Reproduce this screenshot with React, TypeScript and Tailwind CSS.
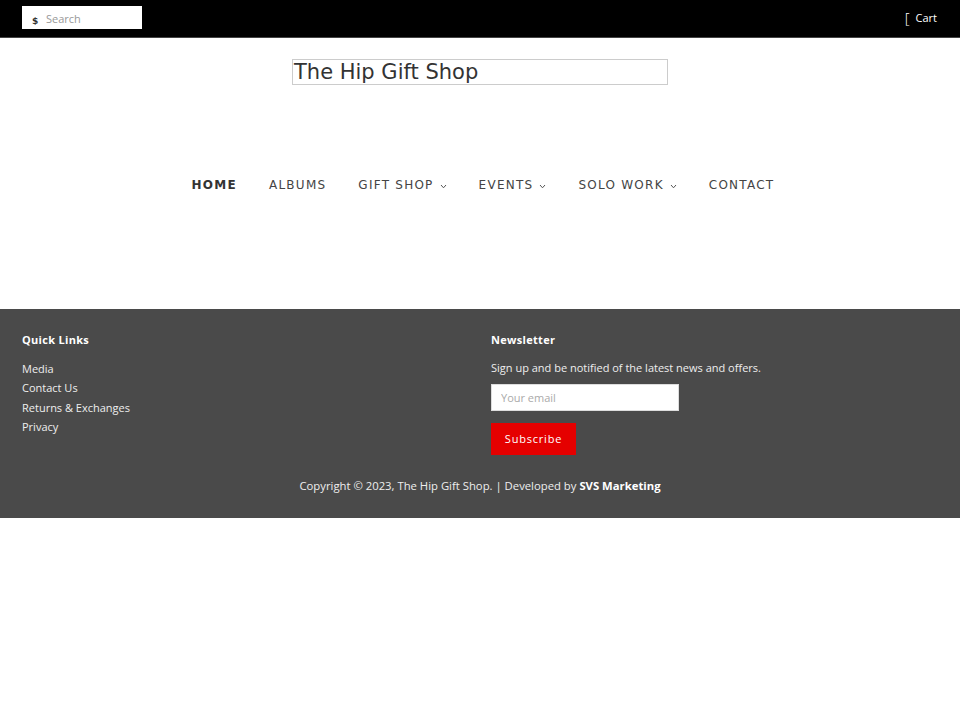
import React from "react";

const navItems = [
  { label: "Home", active: true, drop: false },
  { label: "Albums", active: false, drop: false },
  { label: "Gift Shop", active: false, drop: true },
  { label: "Events", active: false, drop: true },
  { label: "Solo Work", active: false, drop: true },
  { label: "Contact", active: false, drop: false },
];

const quickLinks = ["Media", "Contact Us", "Returns & Exchanges", "Privacy"];

const Chevron = () => (
  <svg width="7" height="5" viewBox="0 0 7 5" className="ml-[6px] mt-[2px]">
    <path d="M1 1 L3.5 3.8 L6 1" fill="none" stroke="#555" strokeWidth="1" />
  </svg>
);

export default function App() {
  return (
    <div className="min-h-[720px] bg-white font-['DejaVu_Sans',sans-serif]">
      {/* top bar */}
      <div className="h-[38px] bg-black border-b border-[#444] flex items-center justify-between pl-[22px] pr-[23px]">
        <div className="relative w-[120px] h-[23px] bg-white mt-[-2px]">
          <span className="absolute left-[10px] top-[11px] text-[9px] font-bold text-[#333] leading-none">$</span>
          <input
            placeholder="Search"
            className="w-full h-full pl-[24px] pb-[2px] text-[11px] text-[#333] placeholder:text-[#999] outline-none bg-transparent font-['Open_Sans',sans-serif]"
          />
        </div>
        <div className="flex items-center text-white text-[11px] font-['Open_Sans',sans-serif]">
          <span className="text-[15px] font-light mr-[6px] leading-none">[</span>
          <span>Cart</span>
        </div>
      </div>

      {/* header */}
      <div className="flex justify-center pt-[21px]">
        <div className="w-[376px] h-[26px] border border-[#ccc] flex items-center text-[21px] text-[#333] leading-none pl-[1px]">
          The Hip Gift Shop
        </div>
      </div>

      {/* navigation */}
      <nav className="flex justify-center items-center gap-[32px] mt-[89px] h-[22px] pl-[6px]">
        {navItems.map((item) => (
          <a
            key={item.label}
            href="#"
            className={`flex items-center uppercase text-[12px] tracking-[1.25px] ${
              item.active ? "font-bold text-[#333]" : "text-[#444]"
            }`}
          >
            {item.label}
            {item.drop && <Chevron />}
          </a>
        ))}
      </nav>

      {/* footer */}
      <footer className="mt-[113px] bg-[#4a4a4a] text-white px-[22px] pt-[23px] pb-[23px] font-['Open_Sans',sans-serif]">
        <div className="grid grid-cols-2 gap-[22px]">
          <div>
            <h4 className="text-[11px] font-bold mb-[13px] tracking-[0.3px]">Quick Links</h4>
            <ul className="text-[11px] text-[#eee] flex flex-col gap-[5px]">
              {quickLinks.map((l) => (
                <li key={l} className="leading-[14.5px]">{l}</li>
              ))}
            </ul>
          </div>
          <div>
            <h4 className="text-[11px] font-bold mb-[11px] tracking-[0.3px]">Newsletter</h4>
            <p className="text-[11px] text-[#eee] mb-[8px]">Sign up and be notified of the latest news and offers.</p>
            <input
              placeholder="Your email"
              className="block w-[188px] h-[27px] bg-white px-[9px] text-[11px] text-[#333] placeholder:text-[#aaa] outline-none border border-[#ddd]"
            />
            <button className="mt-[12px] w-[85px] h-[32px] bg-[#e50000] text-white text-[11px] tracking-[0.8px]">
              Subscribe
            </button>
          </div>
        </div>
        <p className="text-center text-[11.3px] text-[#eee] mt-[23px]">
          Copyright © 2023, The Hip Gift Shop. | Developed by <b className="text-white">SVS Marketing</b>
        </p>
      </footer>
    </div>
  );
}
